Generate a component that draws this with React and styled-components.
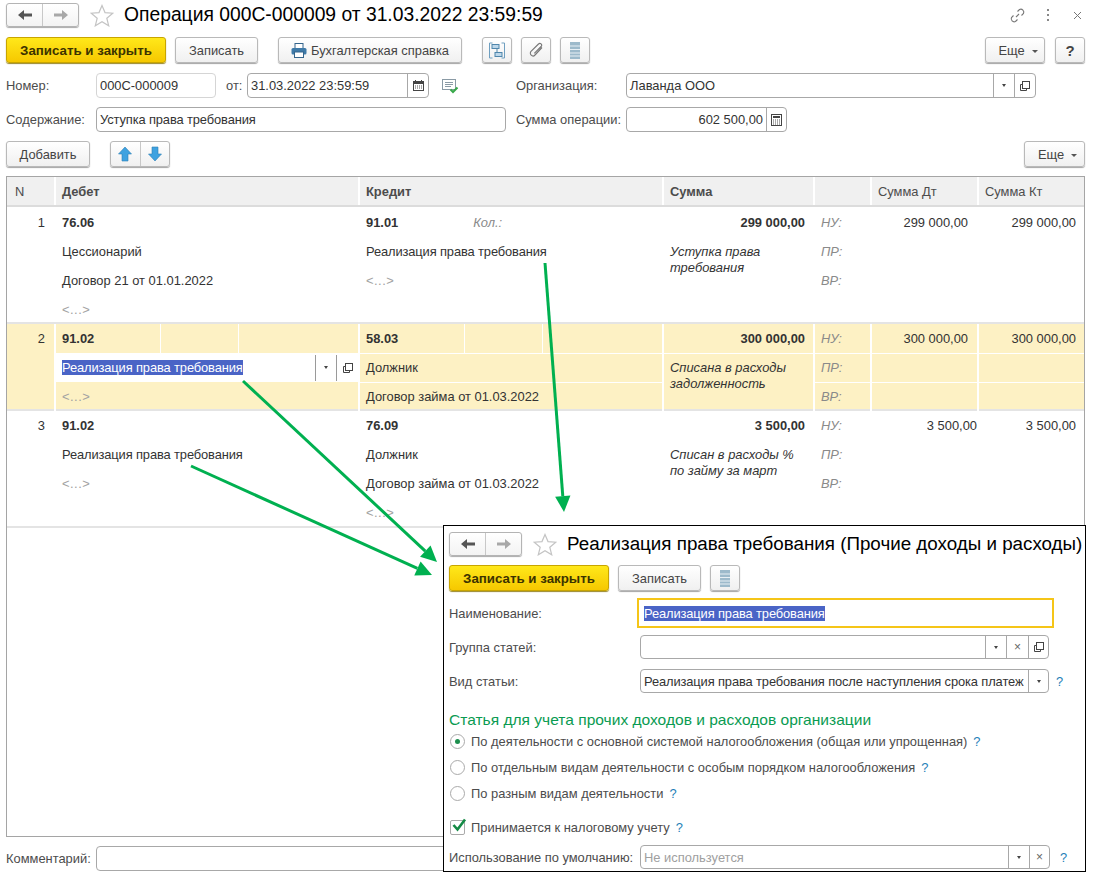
import React from "react";
import styled, { createGlobalStyle, css } from "styled-components";

const GlobalStyle = createGlobalStyle`
  html, body { margin: 0; padding: 0; background: #fff; }
  * { box-sizing: border-box; }
  body { font-family: "Liberation Sans", Arial, sans-serif; font-size: 12.9px; color: #333; }
`;

const Page = styled.div`
  position: relative;
  width: 1096px;
  height: 879px;
  overflow: hidden;
  background: #fff;
  padding: 3px 11px 0 6px;
`;

/* ---------title---------- */
const TitleRow = styled.div`
  display: flex;
  align-items: center;
  height: 24px;
`;

const NavGroup = styled.div`
  display: flex;
  width: ${(p) => p.$width || 73}px;
  height: 24px;
  border: 1px solid #b4b4b4;
  border-radius: 3px;
  background: linear-gradient(#fff, #f3f3f3);
  box-shadow: 0 1px 1px #aaa;
`;

const NavPart = styled.div`
  flex: 1;
  display: flex;
  align-items: center;
  justify-content: center;
  & + & { border-left: 1px solid #c8c8c8; }
`;

const StarBox = styled.div`
  display: flex;
  margin: 0 10px 0 ${(p) => p.$gap || 11}px;
`;

const Title = styled.div`
  font-size: ${(p) => p.$size || 19.3}px;
  color: #000;
  white-space: nowrap;
`;

const WindowIcons = styled.div`
  margin-left: auto;
  margin-right: -1px;
  display: flex;
  align-items: center;
  gap: 13px;
`;

const IconSlot = styled.div`
  display: flex;
  align-items: center;
  justify-content: center;
  width: 17px;
`;

/* ---------toolbar---------- */
const Toolbar = styled.div`
  display: flex;
  align-items: center;
  height: 26px;
  margin-top: ${(p) => p.$top || 10}px;
`;

const buttonBase = css`
  display: flex;
  align-items: center;
  justify-content: center;
  height: 100%;
  border: 1px solid #b9b9b9;
  border-radius: 3px;
  background: linear-gradient(#fff, #f0f0f0);
  box-shadow: 0 1px 1px #a5a5a5;
  color: #444;
  white-space: nowrap;
`;

const Button = styled.div`
  ${buttonBase}
  width: ${(p) => p.$width}px;
  margin-left: ${(p) => p.$left || 0}px;
  gap: ${(p) => p.$gap || 0}px;
`;

const PrimaryButton = styled(Button)`
  background: linear-gradient(#ffe81a, #f6c800);
  border-color: #c8a500;
  box-shadow: 0 1px 1px #99882a;
  color: #3c3300;
  font-weight: bold;
  font-size: 13.3px;
`;

const MoreButton = styled(Button)`
  margin-left: auto;
  padding-left: 6px;
`;

const HelpButton = styled(Button)`
  font-size: 15px;
  font-weight: bold;
`;

const Caret = styled.span`
  width: 0;
  height: 0;
  margin-left: 7px;
  margin-top: 2px;
  border-left: 3px solid transparent;
  border-right: 3px solid transparent;
  border-top: 3px solid #555;
`;

const SplitGroup = styled.div`
  ${buttonBase}
  width: 60px;
  margin-left: 20px;
`;

const SplitPart = styled(NavPart)`
  height: 100%;
`;

/* ---------form---------- */
const FormRow = styled.div`
  display: flex;
  align-items: center;
  height: 25px;
  margin-top: ${(p) => p.$top || 9}px;
`;

const Label = styled.div`
  width: ${(p) => p.$width}px;
  margin-left: ${(p) => p.$left || 0}px;
  color: #4c4c4c;
  white-space: nowrap;
  flex: none;
`;

const Field = styled.div`
  display: flex;
  align-items: center;
  flex: none;
  height: ${(p) => p.$height || 25}px;
  width: ${(p) => p.$width}px;
  margin-left: ${(p) => p.$left || 0}px;
  border: 1px solid ${(p) => (p.$light ? "#d5d5d5" : "#a8a8a8")};
  border-radius: 4px;
  background: #fff;
  overflow: hidden;
`;

const FieldText = styled.div`
  flex: 1;
  min-width: 0;
  padding: 0 ${(p) => p.$pr || 3}px 0 3px;
  color: ${(p) => (p.$muted ? "#a0a0a0" : "#333")};
  text-align: ${(p) => (p.$right ? "right" : "left")};
  letter-spacing: ${(p) => (p.$tight ? "-0.12px" : "normal")};
  white-space: nowrap;
  overflow: hidden;
`;

const FieldButton = styled.div`
  flex: none;
  display: flex;
  align-items: center;
  justify-content: center;
  width: ${(p) => p.$width || 21}px;
  height: 100%;
  border-left: 1px solid #a8a8a8;
`;

const SmallCaret = styled.span`
  width: 0;
  height: 0;
  border-left: 2.5px solid transparent;
  border-right: 2.5px solid transparent;
  border-top: 3px solid #444;
`;

const Selected = styled.span`
  background: #4a64c6;
  color: #fff;
  letter-spacing: -0.12px;
`;

/* ---------table---------- */
const Table = styled.div`
  height: 661px;
  margin-top: 9px;
  border: 1px solid #a5a5a5;
`;

const COLUMNS = "47px 304px 304px 151px 57px 107px 107px";

const HeadRow = styled.div`
  display: grid;
  grid-template-columns: ${COLUMNS};
  height: 30px;
  background: #f0f0f0;
  border-bottom: 2px solid #dcdcdc;
`;

const HeadCell = styled.div`
  display: flex;
  align-items: center;
  padding-left: ${(p) => p.$pad || 6}px;
  color: #4c4c4c;
  font-weight: ${(p) => (p.$bold ? "bold" : "normal")};
  border-left: ${(p) => (p.$first ? "none" : "2px solid #fff")};
`;

const EntryRow = styled.div`
  display: grid;
  grid-template-columns: ${COLUMNS};
  background: ${(p) => (p.$active ? "#fdf1c4" : "#fff")};
  border-bottom: 2px solid #e4e4e4;
  height: ${(p) => p.$height}px;
  padding-top: ${(p) => p.$top || 0}px;
`;

const Column = styled.div`
  display: flex;
  flex-direction: column;
  min-width: 0;
  border-left: ${(p) => (p.$first ? "none" : p.$active ? "2px solid #fff" : "2px solid transparent")};
`;

const Sub = styled.div`
  display: flex;
  align-items: center;
  height: 29px;
  flex: none;
  padding-left: 6px;
  white-space: nowrap;
  justify-content: ${(p) => (p.$right ? "flex-end" : "flex-start")};
  padding-right: ${(p) => (p.$pr !== undefined ? p.$pr : 8)}px;
  padding-bottom: ${(p) => (p.$line ? 1 : 0)}px;
  font-weight: ${(p) => (p.$bold ? "bold" : "normal")};
  font-style: ${(p) => (p.$tax ? "italic" : "normal")};
  color: ${(p) => (p.$tax ? "#8a8a8a" : p.$dim ? "#a2a2a2" : "#333")};
  letter-spacing: ${(p) => (p.$dim ? "0.5px" : p.$tight ? "-0.12px" : "normal")};
  border-top: ${(p) => (p.$line ? "1px solid #fff" : "none")};
`;

const SplitSub = styled.div`
  display: grid;
  grid-template-columns: 104px 78px 1fr;
  height: 29px;
  flex: none;
`;

const SplitCell = styled(Sub)`
  height: 100%;
  min-width: 0;
  & + & { border-left: 1px solid #fff; }
`;

const QtyLabel = styled.span`
  font-style: italic;
  color: #8a8a8a;
  font-weight: normal;
  margin-left: 75px;
`;

const Note = styled.div`
  padding: ${(p) => (p.$line ? 6 : 7)}px 6px 0;
  line-height: 16px;
  font-style: italic;
  color: #333;
  white-space: pre-line;
  flex: 1;
  border-top: ${(p) => (p.$line ? "1px solid #fff" : "none")};
`;

const Editor = styled.div`
  display: flex;
  align-items: center;
  height: 29px;
  flex: none;
  background: #fff;
  padding-left: 6px;
  white-space: nowrap;
`;

const EditorBtn = styled.div`
  display: flex;
  align-items: center;
  justify-content: center;
  width: ${(p) => p.$width}px;
  height: 26px;
  margin-left: ${(p) => (p.$push ? "auto" : "0")};
  border-left: 1px solid #9a9a9a;
`;

const Cross = styled.span`
  font-size: 12px;
  color: #666;
`;

/* ---------overlay---------- */
const Overlay = styled.div`
  position: absolute;
  left: 443px;
  top: 525px;
  width: 643px;
  height: 347px;
  background: #fff;
  border: 1px solid #000;
  padding: 6px 0 0 5px;
  overflow: hidden;
`;

const OverlayField = styled.div`
  display: flex;
  align-items: center;
  height: ${(p) => p.$height || 24}px;
  margin-top: ${(p) => p.$top || 0}px;
`;

const FocusField = styled.div`
  flex: none;
  display: flex;
  align-items: center;
  width: 417px;
  height: 30px;
  margin-left: 188px;
  padding-left: 5px;
  border: 2px solid #f5c518;
`;

const GroupTitle = styled.div`
  margin-top: 17px;
  color: #0a9b52;
  font-size: 15.55px;
  height: 20px;
  line-height: 20px;
`;

const OptionRow = styled.div`
  display: flex;
  align-items: center;
  height: 18px;
  margin-top: ${(p) => p.$top || 8}px;
  color: #4c4c4c;
  white-space: nowrap;
`;

const Radio = styled.span`
  flex: none;
  display: flex;
  align-items: center;
  justify-content: center;
  width: 15px;
  height: 15px;
  margin: 0 6px 0 1px;
  border: 1px solid #aaa;
  border-radius: 50%;
  background: #fff;
  &::after {
    content: "";
    display: ${(p) => (p.$checked ? "block" : "none")};
    width: 5px;
    height: 5px;
    border-radius: 50%;
    background: #1d8f4e;
  }
`;

const CheckBox = styled.span`
  position: relative;
  flex: none;
  width: 15px;
  height: 15px;
  margin: 0 6px 0 1px;
  border: 1px solid #aaa;
  border-radius: 2px;
`;

const Help = styled.span`
  margin-left: ${(p) => p.$left || 6}px;
  color: #1f7fb8;
  font-weight: normal;
  flex: none;
`;

const ArrowLayer = styled.svg`
  position: absolute;
  left: 0;
  top: 0;
  pointer-events: none;
`;

/* ---------icons---------- */
const BackIcon = ({ color = "#555" }) => (
  <svg width="16" height="12" viewBox="0 0 16 12">
    <path d="M1 6 L7 1 V4.5 H15 V7.5 H7 V11 Z" fill={color} />
  </svg>
);

const ForwardIcon = ({ color = "#a8a8a8" }) => (
  <svg width="16" height="12" viewBox="0 0 16 12">
    <path d="M15 6 L9 1 V4.5 H1 V7.5 H9 V11 Z" fill={color} />
  </svg>
);

const StarIcon = () => (
  <svg width="24" height="23" viewBox="0 0 24 23">
    <path d="M12 1.5 L15 8.6 L22.8 9.2 L16.8 14.2 L18.7 21.8 L12 17.7 L5.3 21.8 L7.2 14.2 L1.2 9.2 L9 8.6 Z" fill="#fff" stroke="#c4c4c4" strokeWidth="1.2" />
  </svg>
);

const LinkIcon = () => (
  <svg width="17" height="17" viewBox="0 0 17 17" fill="none" stroke="#777" strokeWidth="1.1">
    <path d="M7 10 L10 7" />
    <path d="M8.5 4.5 L10.5 2.5 a3 3 0 0 1 4 4 L12.5 8.5" />
    <path d="M8.5 12.5 L6.5 14.5 a3 3 0 0 1 -4 -4 L4.5 8.5" />
  </svg>
);

const DotsIcon = () => (
  <svg width="4" height="13" viewBox="0 0 4 13">
    <rect x="1" y="0" width="2" height="2" fill="#888" />
    <rect x="1" y="5" width="2" height="2" fill="#888" />
    <rect x="1" y="10" width="2" height="2" fill="#888" />
  </svg>
);

const CloseIcon = () => (
  <svg width="9" height="9" viewBox="0 0 9 9" stroke="#777" strokeWidth="1">
    <path d="M1 1 L8 8 M8 1 L1 8" />
  </svg>
);

const PrinterIcon = () => (
  <svg width="16" height="15" viewBox="0 0 16 15">
    <rect x="4" y="0.5" width="8" height="5" fill="#fff" stroke="#35658c" />
    <rect x="0.5" y="5" width="15" height="6.5" rx="1.5" fill="#3f7aa8" />
    <rect x="3.5" y="9" width="9" height="5.5" fill="#fff" stroke="#35658c" />
  </svg>
);

const StructureIcon = () => (
  <svg width="16" height="17" viewBox="0 0 16 17" fill="none">
    <path d="M3.5 1 H0.5 V16 H3.5 M12.5 1 H15.5 V16 H12.5" stroke="#6f9fc0" />
    <rect x="3" y="2.5" width="7" height="4" fill="#bcd7ea" stroke="#4f86ac" />
    <rect x="6" y="10.5" width="7" height="4" fill="#bcd7ea" stroke="#4f86ac" />
    <path d="M8 6.5 V10.5" stroke="#4f86ac" />
  </svg>
);

const ClipIcon = () => (
  <svg width="15" height="16" viewBox="0 0 15 16" fill="none" stroke="#777" strokeWidth="1.1">
    <path d="M13 5.5 L6 13 a2.6 2.6 0 0 1 -4 -3.6 L9.5 2 a1.8 1.8 0 0 1 2.6 2.5 L5.3 11.3" />
  </svg>
);

const ListIcon = () => (
  <svg width="10" height="17" viewBox="0 0 10 17">
    <rect x="0" y="0" width="10" height="17" fill="#9dbacb" />
    <path d="M0 4 H10 M0 7.5 H10 M0 11 H10 M0 14 H10" stroke="#e8f0f5" />
  </svg>
);

const CalendarIcon = () => (
  <svg width="11" height="11" viewBox="0 0 11 11">
    <rect x="0.5" y="1.5" width="10" height="9" fill="#fff" stroke="#444" />
    <rect x="0.5" y="1.5" width="10" height="2.5" fill="#444" />
    <path d="M2.5 0 V2 M8.5 0 V2" stroke="#444" />
    <path d="M2 6 H9 M2 8 H9" stroke="#555" strokeDasharray="1 1" />
  </svg>
);

const DocCheckIcon = () => (
  <svg width="17" height="16" viewBox="0 0 17 16">
    <rect x="0.5" y="1.5" width="13" height="10" fill="#fff" stroke="#8a9aa5" />
    <path d="M3 4.5 H11 M3 6.5 H11 M3 8.5 H9" stroke="#8a9aa5" />
    <path d="M8.5 11.5 L11 14 L15.5 9.5" fill="none" stroke="#38a84a" strokeWidth="2" />
  </svg>
);

const CalcIcon = () => (
  <svg width="11" height="12" viewBox="0 0 11 12">
    <rect x="0.5" y="0.5" width="10" height="11" fill="#fff" stroke="#444" />
    <rect x="2" y="2" width="7" height="2" fill="#444" />
    <path d="M2 6 H9 M2 8 H9 M2 10 H9" stroke="#555" strokeDasharray="1 1" />
  </svg>
);

const OpenIcon = () => (
  <svg width="10" height="10" viewBox="0 0 10 10" fill="none" stroke="#444">
    <path d="M0.5 3.5 H2.5 M0.5 3.5 V9.5 H6.5 V7.5" />
    <rect x="2.5" y="0.5" width="7" height="7" />
  </svg>
);

const UpIcon = () => (
  <svg width="14" height="16" viewBox="0 0 14 16">
    <path d="M7 1 L13.5 8 H10 V15 H4 V8 H0.5 Z" fill="#3fa2e0" stroke="#2b7fb5" strokeWidth="0.6" />
  </svg>
);

const DownIcon = () => (
  <svg width="14" height="16" viewBox="0 0 14 16">
    <path d="M7 15 L13.5 8 H10 V1 H4 V8 H0.5 Z" fill="#3fa2e0" stroke="#2b7fb5" strokeWidth="0.6" />
  </svg>
);

const CheckMark = () => (
  <svg width="17" height="17" viewBox="0 0 17 17" style={{ position: "absolute", left: 0, top: -4 }}>
    <path d="M2.5 8 L6.5 12.5 L14 2.5" fill="none" stroke="#148a45" strokeWidth="2.6" />
  </svg>
);

const DropBtn = ({ width }) => (
  <FieldButton $width={width}>
    <SmallCaret />
  </FieldButton>
);

const OpenBtn = ({ width }) => (
  <FieldButton $width={width}>
    <OpenIcon />
  </FieldButton>
);

const ClearBtn = ({ width }) => (
  <FieldButton $width={width}>
    <Cross>×</Cross>
  </FieldButton>
);

function Arrow({ x1, y1, x2, y2, size = 16 }) {
  // линия + наконечник, считаем по углу
  const a = Math.atan2(y2 - y1, x2 - x1);
  const bx = x2 - Math.cos(a) * size;
  const by = y2 - Math.sin(a) * size;
  const nx = -Math.sin(a) * (size * 0.48);
  const ny = Math.cos(a) * (size * 0.48);
  return (
    <g>
      <line x1={x1} y1={y1} x2={bx} y2={by} stroke="#00b050" strokeWidth="3" />
      <polygon points={`${x2},${y2} ${bx + nx},${by + ny} ${bx - nx},${by - ny}`} fill="#00b050" />
    </g>
  );
}

export default function App() {
  return (
    <Page>
      <GlobalStyle />

      {/* ---------title---------- */}
      <TitleRow>
        <NavGroup>
          <NavPart>
            <BackIcon />
          </NavPart>
          <NavPart>
            <ForwardIcon />
          </NavPart>
        </NavGroup>
        <StarBox>
          <StarIcon />
        </StarBox>
        <Title>Операция 000С-000009 от 31.03.2022 23:59:59</Title>
        <WindowIcons>
          <IconSlot>
            <LinkIcon />
          </IconSlot>
          <IconSlot>
            <DotsIcon />
          </IconSlot>
          <IconSlot>
            <CloseIcon />
          </IconSlot>
        </WindowIcons>
      </TitleRow>

      {/* ---------toolbar---------- */}
      <Toolbar>
        <PrimaryButton $width={160}>Записать и закрыть</PrimaryButton>
        <Button $width={83} $left={9}>Записать</Button>
        <Button $width={184} $left={20} $gap={4}>
          <PrinterIcon />
          Бухгалтерская справка
        </Button>
        <Button $width={30} $left={20}>
          <StructureIcon />
        </Button>
        <Button $width={30} $left={9}>
          <ClipIcon />
        </Button>
        <Button $width={30} $left={9}>
          <ListIcon />
        </Button>
        <MoreButton $width={60}>
          Еще
          <Caret />
        </MoreButton>
        <HelpButton $width={30} $left={10}>?</HelpButton>
      </Toolbar>

      {/* ---------form---------- */}
      <FormRow $top={10}>
        <Label $width={90}>Номер:</Label>
        <Field $width={120} $light>
          <FieldText>000С-000009</FieldText>
        </Field>
        <Label $width={21} $left={10}>от:</Label>
        <Field $width={182}>
          <FieldText>31.03.2022 23:59:59</FieldText>
          <FieldButton>
            <CalendarIcon />
          </FieldButton>
        </Field>
        <StarBox $gap={13}>
          <DocCheckIcon />
        </StarBox>
        <Label $width={110} $left={47}>Организация:</Label>
        <Field $width={410}>
          <FieldText>Лаванда ООО</FieldText>
          <DropBtn />
          <OpenBtn />
        </Field>
      </FormRow>
      <FormRow>
        <Label $width={90}>Содержание:</Label>
        <Field $width={410}>
          <FieldText $tight>Уступка права требования</FieldText>
        </Field>
        <Label $width={110} $left={10}>Сумма операции:</Label>
        <Field $width={161}>
          <FieldText $right>602 500,00</FieldText>
          <FieldButton $width={20}>
            <CalcIcon />
          </FieldButton>
        </Field>
      </FormRow>
      <Toolbar $top={9}>
        <Button $width={84}>Добавить</Button>
        <SplitGroup>
          <SplitPart>
            <UpIcon />
          </SplitPart>
          <SplitPart>
            <DownIcon />
          </SplitPart>
        </SplitGroup>
        <MoreButton $width={61}>
          Еще
          <Caret />
        </MoreButton>
      </Toolbar>

      {/* ---------table---------- */}
      <Table>
        <HeadRow>
          <HeadCell $first $pad={8}>N</HeadCell>
          <HeadCell $bold>Дебет</HeadCell>
          <HeadCell $bold>Кредит</HeadCell>
          <HeadCell $bold>Сумма</HeadCell>
          <HeadCell />
          <HeadCell>Сумма Дт</HeadCell>
          <HeadCell>Сумма Кт</HeadCell>
        </HeadRow>

        <EntryRow $height={117} $top={1}>
          <Column $first>
            <Sub $right $pr={9}>1</Sub>
          </Column>
          <Column>
            <Sub $bold>76.06</Sub>
            <Sub>Цессионарий</Sub>
            <Sub>Договор 21 от 01.01.2022</Sub>
            <Sub $dim>&lt;...&gt;</Sub>
          </Column>
          <Column>
            <Sub $bold>
              91.01
              <QtyLabel>Кол.:</QtyLabel>
            </Sub>
            <Sub $tight>Реализация права требования</Sub>
            <Sub $dim>&lt;...&gt;</Sub>
          </Column>
          <Column>
            <Sub $right $bold>299 000,00</Sub>
            <Note>{"Уступка права\nтребования"}</Note>
          </Column>
          <Column>
            <Sub $tax>НУ:</Sub>
            <Sub $tax>ПР:</Sub>
            <Sub $tax>ВР:</Sub>
          </Column>
          <Column>
            <Sub $right $pr={9}>299 000,00</Sub>
          </Column>
          <Column>
            <Sub $right>299 000,00</Sub>
          </Column>
        </EntryRow>

        <EntryRow $height={87} $active>
          <Column $first>
            <Sub $right $pr={9}>2</Sub>
          </Column>
          <Column $active>
            <SplitSub>
              <SplitCell $bold>91.02</SplitCell>
              <SplitCell />
              <SplitCell />
            </SplitSub>
            <Editor>
              <Selected>Реализация права требования</Selected>
              <EditorBtn $width={21} $push>
                <SmallCaret />
              </EditorBtn>
              <EditorBtn $width={22}>
                <OpenIcon />
              </EditorBtn>
            </Editor>
            <Sub $dim>&lt;...&gt;</Sub>
          </Column>
          <Column $active>
            <SplitSub>
              <SplitCell $bold>58.03</SplitCell>
              <SplitCell />
              <SplitCell />
            </SplitSub>
            <Sub $line>Должник</Sub>
            <Sub $line>Договор займа от 01.03.2022</Sub>
          </Column>
          <Column $active>
            <Sub $right $bold>300 000,00</Sub>
            <Note $line>{"Списана в расходы\nзадолженность"}</Note>
          </Column>
          <Column $active>
            <Sub $tax>НУ:</Sub>
            <Sub $tax $line>ПР:</Sub>
            <Sub $tax $line>ВР:</Sub>
          </Column>
          <Column $active>
            <Sub $right $pr={9}>300 000,00</Sub>
            <Sub $line />
            <Sub $line />
          </Column>
          <Column $active>
            <Sub $right>300 000,00</Sub>
            <Sub $line />
            <Sub $line />
          </Column>
        </EntryRow>

        <EntryRow $height={117}>
          <Column $first>
            <Sub $right $pr={9}>3</Sub>
          </Column>
          <Column>
            <Sub $bold>91.02</Sub>
            <Sub $tight>Реализация права требования</Sub>
            <Sub $dim>&lt;...&gt;</Sub>
          </Column>
          <Column>
            <Sub $bold>76.09</Sub>
            <Sub>Должник</Sub>
            <Sub>Договор займа от 01.03.2022</Sub>
            <Sub $dim>&lt;...&gt;</Sub>
          </Column>
          <Column>
            <Sub $right $bold>3 500,00</Sub>
            <Note>{"Списан в расходы %\nпо займу за март"}</Note>
          </Column>
          <Column>
            <Sub $tax>НУ:</Sub>
            <Sub $tax>ПР:</Sub>
            <Sub $tax>ВР:</Sub>
          </Column>
          <Column>
            <Sub $right $pr={0}>3 500,00</Sub>
          </Column>
          <Column>
            <Sub $right>3 500,00</Sub>
          </Column>
        </EntryRow>
      </Table>

      <FormRow $top={9}>
        <Label $width={90}>Комментарий:</Label>
        <Field $width={500} />
      </FormRow>

      <ArrowLayer width="1096" height="879">
        <Arrow x1={545} y1={263} x2={564} y2={512} />
        <Arrow x1={243} y1={381} x2={437} y2={562} />
        <Arrow x1={191} y1={466} x2={432} y2={575} />
      </ArrowLayer>

      {/* ---------карточка статьи поверх формы---------- */}
      <Overlay>
        <TitleRow>
          <NavGroup>
            <NavPart>
              <BackIcon />
            </NavPart>
            <NavPart>
              <ForwardIcon />
            </NavPart>
          </NavGroup>
          <StarBox $gap={11}>
            <StarIcon />
          </StarBox>
          <Title $size={18.8}>Реализация права требования (Прочие доходы и расходы)</Title>
        </TitleRow>
        <Toolbar $top={9}>
          <PrimaryButton $width={160}>Записать и закрыть</PrimaryButton>
          <Button $width={83} $left={9}>Записать</Button>
          <Button $width={30} $left={9}>
            <ListIcon />
          </Button>
        </Toolbar>
        <OverlayField $height={30} $top={7}>
          <Label $width={0}>Наименование:</Label>
          <FocusField>
            <Selected>Реализация права требования</Selected>
          </FocusField>
        </OverlayField>
        <OverlayField $top={7}>
          <Label $width={191}>Группа статей:</Label>
          <Field $width={409} $height={24}>
            <FieldText />
            <DropBtn />
            <ClearBtn width={22} />
            <OpenBtn width={20} />
          </Field>
        </OverlayField>
        <OverlayField $top={10}>
          <Label $width={191}>Вид статьи:</Label>
          <Field $width={409} $height={24}>
            <FieldText $tight>Реализация права требования после наступления срока платеж</FieldText>
            <DropBtn width={20} />
          </Field>
          <Help $left={7}>?</Help>
        </OverlayField>
        <GroupTitle>Статья для учета прочих доходов и расходов организации</GroupTitle>
        <OptionRow $top={2}>
          <Radio $checked />
          По деятельности с основной системой налогообложения (общая или упрощенная)
          <Help>?</Help>
        </OptionRow>
        <OptionRow>
          <Radio />
          По отдельным видам деятельности с особым порядком налогообложения
          <Help>?</Help>
        </OptionRow>
        <OptionRow>
          <Radio />
          По разным видам деятельности
          <Help>?</Help>
        </OptionRow>
        <OptionRow $top={16}>
          <CheckBox>
            <CheckMark />
          </CheckBox>
          Принимается к налоговому учету
          <Help>?</Help>
        </OptionRow>
        <OverlayField $top={9}>
          <Label $width={191}>Использование по умолчанию:</Label>
          <Field $width={410} $height={24}>
            <FieldText $muted>Не используется</FieldText>
            <DropBtn />
            <ClearBtn width={20} />
          </Field>
          <Help $left={10}>?</Help>
        </OverlayField>
      </Overlay>
    </Page>
  );
}
